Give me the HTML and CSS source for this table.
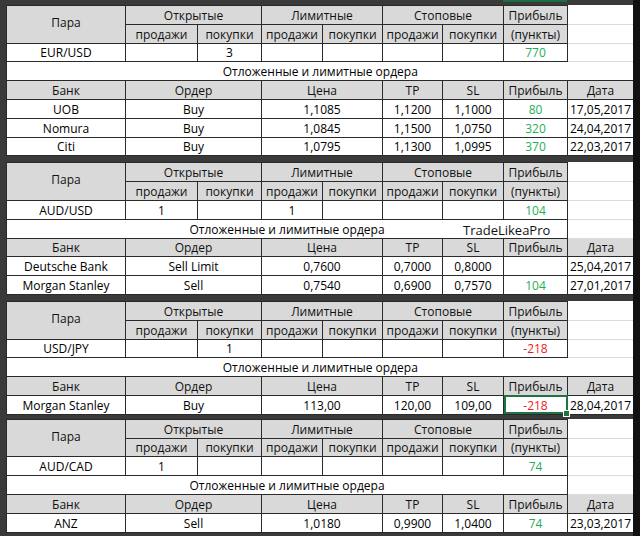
FILE: index.html
```html
<!DOCTYPE html>
<html lang="ru">
<head>
<meta charset="utf-8">
<title>Ордера</title>
<link rel="stylesheet" href="styles.css">
</head>
<body>
<div class="sheet">
  <div class="colmark"></div>

  <table class="block b1">
    <colgroup><col class="c1"><col class="c2"><col class="c3"><col class="c4"><col class="c5"><col class="c6"><col class="c7"><col class="c8"><col class="c9"></colgroup>
    <tr><th class="hd mid" rowspan="2">Пара</th><th class="hd" colspan="2">Открытые</th><th class="hd" colspan="2">Лимитные</th><th class="hd" colspan="2">Стоповые</th><th class="hd">Прибыль</th><td class="blank"></td></tr>
    <tr><th class="hd">продажи</th><th class="hd">покупки</th><th class="hd">продажи</th><th class="hd">покупки</th><th class="hd">продажи</th><th class="hd">покупки</th><th class="hd">(пункты)</th><td class="blank"></td></tr>
    <tr><td>EUR/USD</td><td></td><td>3</td><td></td><td></td><td></td><td></td><td class="pos">770</td><td class="blank"></td></tr>
    <tr><td class="title" colspan="9">Отложенные и лимитные ордера</td></tr>
    <tr><th class="hd">Банк</th><th class="hd" colspan="2">Ордер</th><th class="hd" colspan="2">Цена</th><th class="hd">TP</th><th class="hd">SL</th><th class="hd">Прибыль</th><th class="hd">Дата</th></tr>
    <tr><td>UOB</td><td colspan="2">Buy</td><td colspan="2">1,1085</td><td>1,1200</td><td>1,1000</td><td class="pos">80</td><td>17,05,2017</td></tr>
    <tr><td>Nomura</td><td colspan="2">Buy</td><td colspan="2">1,0845</td><td>1,1500</td><td>1,0750</td><td class="pos">320</td><td>24,04,2017</td></tr>
    <tr><td>Citi</td><td colspan="2">Buy</td><td colspan="2">1,0795</td><td>1,1300</td><td>1,0995</td><td class="pos">370</td><td>22,03,2017</td></tr>
  </table>

  <table class="block b2">
    <colgroup><col class="c1"><col class="c2"><col class="c3"><col class="c4"><col class="c5"><col class="c6"><col class="c7"><col class="c8"><col class="c9"></colgroup>
    <tr><th class="hd mid" rowspan="2">Пара</th><th class="hd" colspan="2">Открытые</th><th class="hd" colspan="2">Лимитные</th><th class="hd" colspan="2">Стоповые</th><th class="hd">Прибыль</th><td class="blank"></td></tr>
    <tr><th class="hd">продажи</th><th class="hd">покупки</th><th class="hd">продажи</th><th class="hd">покупки</th><th class="hd">продажи</th><th class="hd">покупки</th><th class="hd">(пункты)</th><td class="blank"></td></tr>
    <tr><td>AUD/USD</td><td>1</td><td></td><td>1</td><td></td><td></td><td></td><td class="pos">104</td><td class="blank"></td></tr>
    <tr><td class="title" colspan="8"><span class="titletext">Отложенные и лимитные ордера</span><span class="brand">TradeLikeaPro</span></td><td class="blank"></td></tr>
    <tr><th class="hd">Банк</th><th class="hd" colspan="2">Ордер</th><th class="hd" colspan="2">Цена</th><th class="hd">TP</th><th class="hd">SL</th><th class="hd">Прибыль</th><th class="hd">Дата</th></tr>
    <tr><td>Deutsche Bank</td><td colspan="2">Sell Limit</td><td colspan="2">0,7600</td><td>0,7000</td><td>0,8000</td><td></td><td>25,04,2017</td></tr>
    <tr><td>Morgan Stanley</td><td colspan="2">Sell</td><td colspan="2">0,7540</td><td>0,6900</td><td>0,7570</td><td class="pos">104</td><td>27,01,2017</td></tr>
  </table>

  <table class="block b3">
    <colgroup><col class="c1"><col class="c2"><col class="c3"><col class="c4"><col class="c5"><col class="c6"><col class="c7"><col class="c8"><col class="c9"></colgroup>
    <tr><th class="hd mid" rowspan="2">Пара</th><th class="hd" colspan="2">Открытые</th><th class="hd" colspan="2">Лимитные</th><th class="hd" colspan="2">Стоповые</th><th class="hd">Прибыль</th><td class="blank"></td></tr>
    <tr><th class="hd">продажи</th><th class="hd">покупки</th><th class="hd">продажи</th><th class="hd">покупки</th><th class="hd">продажи</th><th class="hd">покупки</th><th class="hd">(пункты)</th><td class="blank"></td></tr>
    <tr><td>USD/JPY</td><td></td><td>1</td><td></td><td></td><td></td><td></td><td class="neg">-218</td><td class="blank"></td></tr>
    <tr><td class="title" colspan="9">Отложенные и лимитные ордера</td></tr>
    <tr><th class="hd">Банк</th><th class="hd" colspan="2">Ордер</th><th class="hd" colspan="2">Цена</th><th class="hd">TP</th><th class="hd">SL</th><th class="hd">Прибыль</th><th class="hd">Дата</th></tr>
    <tr><td>Morgan Stanley</td><td colspan="2">Buy</td><td colspan="2">113,00</td><td>120,00</td><td>109,00</td><td class="neg selected">-218<span class="handle"></span></td><td>28,04,2017</td></tr>
  </table>

  <table class="block b4">
    <colgroup><col class="c1"><col class="c2"><col class="c3"><col class="c4"><col class="c5"><col class="c6"><col class="c7"><col class="c8"><col class="c9"></colgroup>
    <tr><th class="hd mid" rowspan="2">Пара</th><th class="hd" colspan="2">Открытые</th><th class="hd" colspan="2">Лимитные</th><th class="hd" colspan="2">Стоповые</th><th class="hd">Прибыль</th><td class="blank"></td></tr>
    <tr><th class="hd">продажи</th><th class="hd">покупки</th><th class="hd">продажи</th><th class="hd">покупки</th><th class="hd">продажи</th><th class="hd">покупки</th><th class="hd">(пункты)</th><td class="blank"></td></tr>
    <tr><td>AUD/CAD</td><td>1</td><td></td><td></td><td></td><td></td><td></td><td class="pos">74</td><td class="blank"></td></tr>
    <tr><td class="title" colspan="8">Отложенные и лимитные ордера</td><td class="blank"></td></tr>
    <tr><th class="hd">Банк</th><th class="hd" colspan="2">Ордер</th><th class="hd" colspan="2">Цена</th><th class="hd">TP</th><th class="hd">SL</th><th class="hd">Прибыль</th><th class="hd">Дата</th></tr>
    <tr><td>ANZ</td><td colspan="2">Sell</td><td colspan="2">1,0180</td><td>0,9900</td><td>1,0400</td><td class="pos">74</td><td>23,03,2017</td></tr>
  </table>
</div>
</body>
</html>
```

FILE: styles.css
```css
html, body {
  margin: 0;
  padding: 0;
  background: #262626;
}

.sheet {
  position: relative;
  width: 640px;
  height: 536px;
  box-sizing: border-box;
  padding: 5px 0 0 6px;
  background: #3a3a3a;
  border-right: 7px solid #111;
  display: flex;
  flex-direction: column;
  gap: 6px;
  overflow: hidden;
  font-family: "Open Sans", "Liberation Sans", Arial, sans-serif;
  font-size: 12px;
  color: #000;
}

.colmark {
  position: absolute;
  top: 0;
  left: 503px;
  width: 64px;
  height: 2px;
  background: #1d6b3f;
}

.block {
  width: 627px;
  table-layout: fixed;
  border-collapse: collapse;
  background: #fff;
  flex: none;
}

.b4 { margin-top: -2px; }

.c1 { width: 119px; }
.c2 { width: 72px; }
.c3 { width: 64px; }
.c4 { width: 61px; }
.c5 { width: 60px; }
.c6 { width: 60px; }
.c7 { width: 61px; }
.c8 { width: 64px; }
.c9 { width: 66px; }

.block tr { height: 18.8px; }

.block th,
.block td {
  padding: 0 1px 0;
  border: 1px solid #2a2a2a;
  font-weight: normal;
  text-align: center;
  vertical-align: bottom;
  line-height: 16px;
  white-space: nowrap;
  overflow: visible;
}

.block th.hd {
  background: #d9d9d9;
  color: #111;
}

.block th.mid {
  vertical-align: middle;
  padding-bottom: 3px;
}

.block td.blank {
  border-top: 1px solid #dcdcdc;
  border-bottom: 1px solid #dcdcdc;
  border-right: none;
  background: #fff;
}

.b1 tr:first-child td.blank,
.b2 tr:first-child td.blank,
.b3 tr:first-child td.blank,
.b4 tr:first-child td.blank {
  border-top: none;
}

.block td.title {
  position: relative;
  border-top-color: #2a2a2a;
}

.b1 td.title,
.b3 td.title {
  border-right: none;
}

.brand {
  position: absolute;
  left: 456px;
  bottom: 0;
  font-size: 13px;
  color: #111;
}

.pos { color: #1fae5b; }
.neg { color: #ee1c24; }

.block td.selected {
  position: relative;
  outline: 2px solid #217346;
  outline-offset: -2px;
}

.handle {
  position: absolute;
  right: -3px;
  bottom: -3px;
  width: 5px;
  height: 5px;
  background: #217346;
  border: 1px solid #fff;
}
```
